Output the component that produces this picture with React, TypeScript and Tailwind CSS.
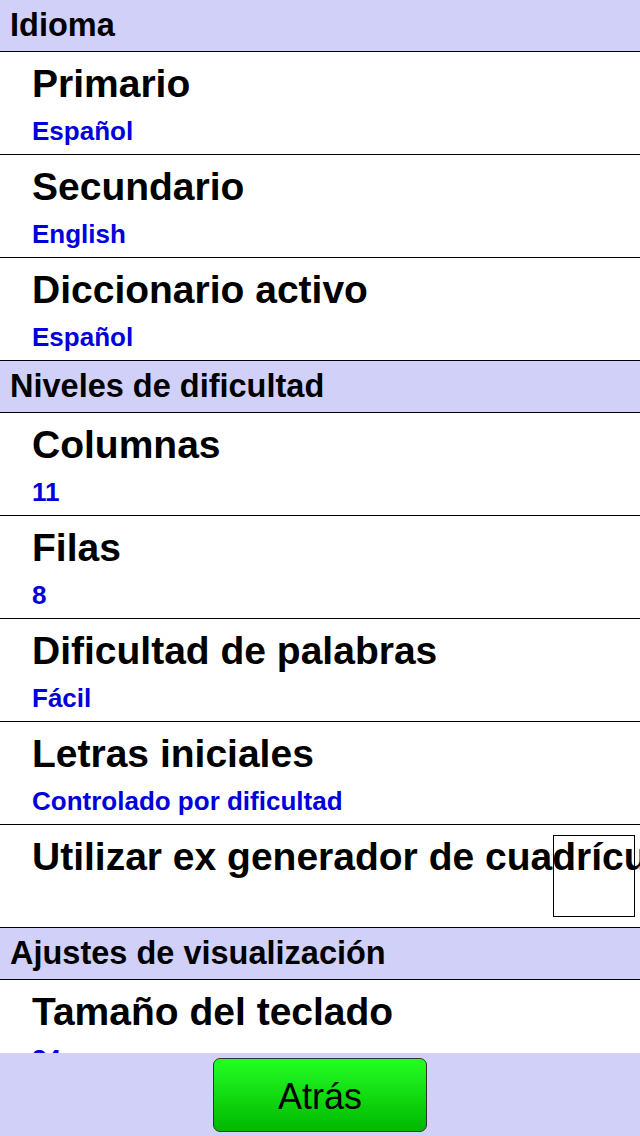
const sections = [
  {
    title: "Idioma",
    rows: [
      { label: "Primario", value: "Español" },
      { label: "Secundario", value: "English" },
      { label: "Diccionario activo", value: "Español" },
    ],
  },
  {
    title: "Niveles de dificultad",
    rows: [
      { label: "Columnas", value: "11" },
      { label: "Filas", value: "8" },
      { label: "Dificultad de palabras", value: "Fácil" },
      { label: "Letras iniciales", value: "Controlado por dificultad" },
      { label: "Utilizar ex generador de cuadrícula", checkbox: true },
    ],
  },
  {
    title: "Ajustes de visualización",
    rows: [{ label: "Tamaño del teclado", value: "24" }],
  },
];

type Row = { label: string; value?: string; checkbox?: boolean };

function SettingRow({ row }: { row: Row }) {
  return (
    <div className="relative h-[103px] overflow-hidden border-b border-black bg-white pl-8">
      <div className="whitespace-nowrap pt-[8px] text-[39px] font-bold leading-[48px] text-black">
        {row.label}
      </div>
      {row.value && (
        <div className="mt-[8px] text-[26px] font-bold leading-[30px] text-[#0000dd]">
          {row.value}
        </div>
      )}
      {row.checkbox && (
        <div className="absolute right-[5px] top-[10px] h-[82px] w-[82px] border border-black" />
      )}
    </div>
  );
}

export default function App() {
  return (
    <div className="relative h-[1136px] w-[640px] overflow-hidden bg-white font-['Liberation_Sans',Arial,sans-serif]">
      <div className="h-[1053px] overflow-hidden">
        {sections.map((section) => (
          <div key={section.title}>
            <div className="h-[52px] border-b border-black bg-[#d0d0f8] pl-[10px] text-[32.5px] font-bold leading-[51px] text-black">
              {section.title}
            </div>
            {section.rows.map((row) => (
              <SettingRow key={row.label} row={row} />
            ))}
          </div>
        ))}
      </div>
      <div className="flex h-[83px] justify-center bg-[#d0d0f8] pt-[5px]">
        <button
          type="button"
          className="h-[74px] w-[214px] rounded-[7px] border border-[#333] bg-gradient-to-b from-[#22ff22] to-[#00b800] pt-[3px] text-[36px] text-black"
        >
          Atrás
        </button>
      </div>
    </div>
  );
}
